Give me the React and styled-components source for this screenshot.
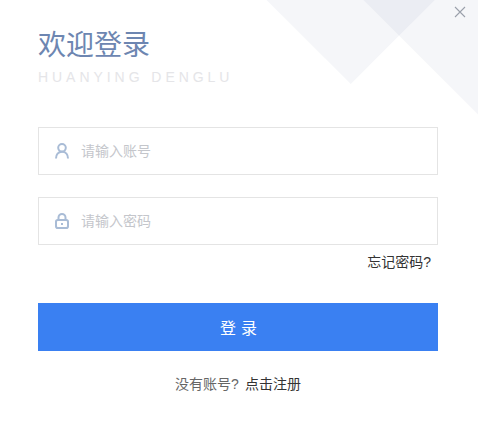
import React from 'react'
import styled, { createGlobalStyle } from 'styled-components'

const Global = createGlobalStyle`
  html, body {
    margin: 0;
    padding: 0;
    background: #fff;
  }
  * { box-sizing: border-box; }
`

const Panel = styled.div`
  position: relative;
  width: 478px;
  height: 424px;
  overflow: hidden;
  background: #fff;
  padding: 27px 40px 0 38px;
  font-family: "Liberation Sans", "Noto Sans CJK SC", sans-serif;
`

// two light squares in the top right corner, they overlap to a darker triangle
const Diamond = styled.div`
  position: absolute;
  width: ${p => p.$size}px;
  height: ${p => p.$size}px;
  left: ${p => p.$left}px;
  top: ${p => p.$top}px;
  background: rgba(110, 130, 170, 0.07);
  transform: rotate(45deg);
`

const Close = styled.button`
  position: absolute;
  top: 6px;
  right: 12px;
  width: 12px;
  height: 12px;
  padding: 0;
  border: 0;
  background: none;
  cursor: pointer;
  display: flex;
`

const Title = styled.h1`
  position: relative;
  margin: 0;
  font-size: 28px;
  line-height: 38px;
  font-weight: 400;
  color: #6d86b1;
`

const Subtitle = styled.div`
  position: relative;
  margin-top: 4px;
  font-size: 14px;
  line-height: 16px;
  letter-spacing: 3.95px;
  color: #e5e5e8;
`

const Form = styled.form`
  position: relative;
  margin-top: 42px;
  display: flex;
  flex-direction: column;
`

const Field = styled.label`
  display: flex;
  align-items: center;
  gap: 12px;
  height: 48px;
  padding-left: 16px;
  margin-bottom: ${p => p.$gap}px;
  border: 1px solid #e4e4e4;
  background: #fff;
`

const Input = styled.input`
  flex: 1;
  min-width: 0;
  border: 0;
  outline: 0;
  padding: 0;
  background: none;
  font-family: inherit;
  font-size: 14px;
  color: #333;
  &::placeholder {
    color: #c4c6cb;
    opacity: 1;
  }
`

const Forgot = styled.a`
  align-self: flex-end;
  margin: 8px 7px 0 0;
  font-size: 14px;
  line-height: 18px;
  color: #333;
  cursor: pointer;
`

const Submit = styled.button`
  height: 48px;
  margin-top: 32px;
  border: 0;
  padding: 0 0 0 6px;
  background: #3a80f2;
  color: #fff;
  font-family: inherit;
  font-size: 16px;
  letter-spacing: 5px;
  cursor: pointer;
`

const Footer = styled.div`
  margin-top: 24px;
  text-align: center;
  font-size: 14px;
  line-height: 18px;
  color: #666;
`

const Register = styled.a`
  margin-left: 6px;
  color: #333;
  cursor: pointer;
`

const UserIcon = () => (
  <svg width="14" height="16" viewBox="0 0 14 16" fill="none" stroke="#a9bcd6" strokeWidth="2">
    <circle cx="7" cy="4.800" r="3.800" />
    <path d="M1 15.500c0-3.800 2.200-6.800 6-6.800s6 3 6 6.800" />
  </svg>
)

const LockIcon = () => (
  <svg width="14" height="16" viewBox="0 0 14 16" fill="none" stroke="#a9bcd6" strokeWidth="2">
    <rect x="1" y="7" width="12" height="8" rx="1.800" />
    <path d="M3.500 7V4.500a3.500 3.500 0 0 1 7 0V7" />
    <rect x="6" y="10" width="2" height="2" fill="#a9bcd6" stroke="none" />
  </svg>
)

const App = () => {
  return (
    <Panel>
      <Global />
      <Diamond $size={141.4} $left={280.3} $top={-86} />
      <Diamond $size={226.3} $left={386.9} $top={-136.1} />
      <Close type="button" aria-label="close">
        <svg width="12" height="12" viewBox="0 0 12 12" stroke="#9aa0ab" strokeWidth="1.1">
          <path d="M1 1l10 10M11 1L1 11" />
        </svg>
      </Close>
      <Title>欢迎登录</Title>
      <Subtitle>HUANYING DENGLU</Subtitle>
      <Form onSubmit={e => e.preventDefault()}>
        <Field $gap={22}>
          <UserIcon />
          <Input placeholder="请输入账号" />
        </Field>
        <Field $gap={0}>
          <LockIcon />
          <Input type="password" placeholder="请输入密码" />
        </Field>
        <Forgot>忘记密码?</Forgot>
        <Submit>登录</Submit>
        <Footer>
          没有账号?<Register>点击注册</Register>
        </Footer>
      </Form>
    </Panel>
  )
}

export default App
